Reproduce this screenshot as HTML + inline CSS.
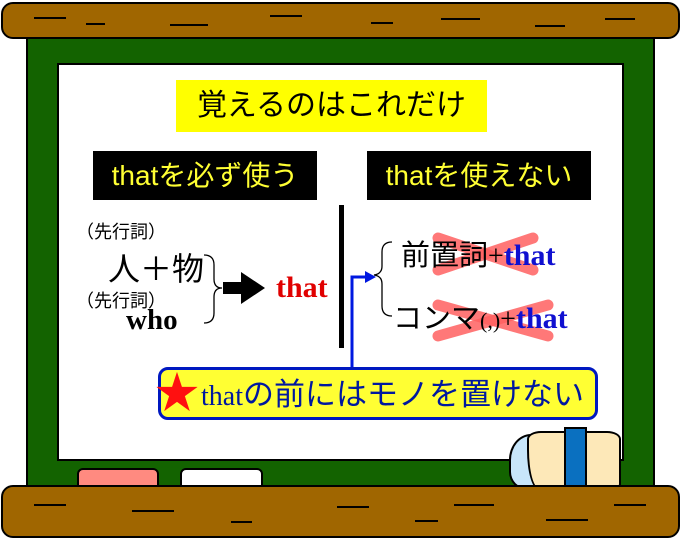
<!DOCTYPE html>
<html><head><meta charset="utf-8"><style>
body{margin:0;width:681px;height:540px;overflow:hidden;background:#fff;position:relative;font-family:"Liberation Sans","Noto Sans CJK JP",sans-serif}
.a{position:absolute;white-space:nowrap}
.log{position:absolute;background:#a06600;border:2px solid #000;border-radius:12px;box-sizing:border-box}
.ln{position:absolute;height:2px;background:#000}
.serif{font-family:"Liberation Serif","Noto Serif CJK SC",serif;font-weight:bold}
</style></head><body>
<div class="a" style="left:26px;top:30px;width:629px;height:470px;background:#136300;border:2px solid #000;box-sizing:border-box"></div>
<div class="a" style="left:57px;top:63px;width:567px;height:398px;background:#fff;border:2px solid #000;box-sizing:border-box"></div>
<div class="log" style="left:1px;top:2px;width:679px;height:37px"></div>
<div class="ln" style="left:34px;top:17px;width:32px"></div>
<div class="ln" style="left:86px;top:23px;width:19px"></div>
<div class="ln" style="left:170px;top:24px;width:38px"></div>
<div class="ln" style="left:270px;top:15px;width:32px"></div>
<div class="ln" style="left:371px;top:22px;width:22px"></div>
<div class="ln" style="left:441px;top:18px;width:39px"></div>
<div class="ln" style="left:535px;top:25px;width:30px"></div>
<div class="ln" style="left:605px;top:18px;width:30px"></div>

<div class="a" style="left:77px;top:468px;width:82px;height:24px;background:#ff8a80;border:2px solid #000;border-radius:6px;box-sizing:border-box"></div>
<div class="a" style="left:180px;top:468px;width:83px;height:24px;background:#fff;border:2px solid #000;border-radius:6px;box-sizing:border-box"></div>
<div class="a" style="left:509px;top:434px;width:40px;height:56px;background:#c8e6fa;border:2px solid #000;border-radius:22px 6px 0 18px/26px 6px 0 18px;box-sizing:border-box"></div>
<div class="a" style="left:527px;top:431px;width:94px;height:59px;background:#fde8b8;border:2px solid #000;border-radius:14px 14px 6px 12px/8px 8px 6px 40px;box-sizing:border-box"></div>
<div class="a" style="left:564px;top:427px;width:23px;height:62px;background:#0a70c0;border:2px solid #000;box-sizing:border-box"></div>

<div class="log" style="left:1px;top:485px;width:679px;height:53px"></div>
<div class="ln" style="left:34px;top:504px;width:32px"></div>
<div class="ln" style="left:132px;top:510px;width:42px"></div>
<div class="ln" style="left:231px;top:521px;width:21px"></div>
<div class="ln" style="left:337px;top:506px;width:32px"></div>
<div class="ln" style="left:415px;top:520px;width:23px"></div>
<div class="ln" style="left:454px;top:504px;width:40px"></div>
<div class="ln" style="left:546px;top:519px;width:42px"></div>
<div class="ln" style="left:614px;top:504px;width:32px"></div>

<div class="a" style="left:176px;top:80px;width:311px;height:52px;background:#ffff00;font-size:30px;line-height:52px;text-align:center">覚えるのはこれだけ</div>
<div class="a" style="left:93px;top:151px;width:224px;height:49px;background:#000;color:#ffff33;font-size:28px;line-height:49px;text-align:center">thatを必ず使う</div>
<div class="a" style="left:367px;top:151px;width:224px;height:49px;background:#000;color:#ffff33;font-size:28px;line-height:49px;text-align:center">thatを使えない</div>

<div class="a" style="left:76px;top:218px;font-size:18px">（先行詞）</div>
<div class="a" style="left:108px;top:244px;font-size:32px">人＋物</div>
<div class="a" style="left:76px;top:287px;font-size:18px">（先行詞）</div>
<div class="a serif" style="left:126px;top:304px;font-size:29px">who</div>
<svg class="a" style="left:0;top:0" width="681" height="540">
<path d="M204 255 q10 0 10 10 v14 q0 9 8 9 q-8 0 -8 9 v16 q0 10 -10 10" fill="none" stroke="#000" stroke-width="1.3"/>
<path d="M223 282 h18 v-10 l24 16 l-24 16 v-10 h-18 z" fill="#000"/>
<rect x="339" y="205" width="5" height="143" fill="#000"/>
<path d="M392 242 q-10 0 -10 10 v14 q0 8 -8 9 q8 1 8 9 v22 q0 10 10 10" fill="none" stroke="#000" stroke-width="1.3"/>
<path d="M352 367 V277 H368" fill="none" stroke="#0018e0" stroke-width="3"/>
<path d="M365 271 L376 277 L365 283 z" fill="#0018e0"/>
<g stroke="#ff6060" stroke-opacity="0.85" stroke-width="11" stroke-linecap="round">
<path d="M438 238 L533 270"/><path d="M438 270 L533 238"/>
<path d="M438 305 L548 336"/><path d="M438 336 L548 305"/>
</g>
</svg>
<div class="a serif" style="left:276px;top:271px;font-size:30px;color:#e00000">that</div>
<div class="a" style="left:401px;top:232px;font-size:29px">前置詞<span class="serif" style="font-weight:normal;font-size:28px">+</span><span class="serif" style="color:#1010d0;font-size:30px">that</span></div>
<div class="a" style="left:393px;top:295px;font-size:29px">コンマ<span style="font-family:'Liberation Serif',serif;font-size:22px">(,)</span><span class="serif" style="font-weight:normal;font-size:28px">+</span><span class="serif" style="color:#1010d0;font-size:30px">that</span></div>

<div class="a" style="left:158px;top:367px;width:440px;height:53px;background:#ffff33;border:3px solid #0018c0;border-radius:10px;box-sizing:border-box"></div>
<div class="a" style="left:155px;top:371px;font-size:44px;color:#ff1010;line-height:46px">★</div>
<div class="a" style="left:201px;top:375px;font-size:31px;color:#0018a0;line-height:40px"><span style="font-family:'Liberation Serif',serif;font-size:28px">that</span>の前にはモノを置けない</div>
</body></html>
